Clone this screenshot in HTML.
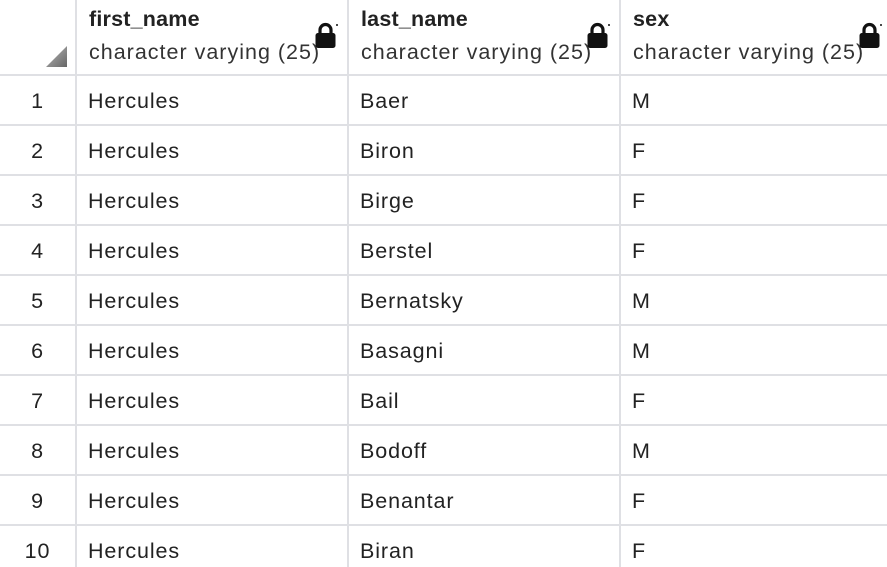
<!DOCTYPE html>
<html><head><style>
body{margin:0;width:887px;height:567px;overflow:hidden;background:#fff;font-family:"Liberation Sans",Arial,sans-serif;color:#222;}
.c{position:absolute;white-space:nowrap;}
.vl{position:absolute;top:0;width:2px;height:567px;background:#dfe0e4;}
.hl{position:absolute;left:0;width:887px;height:2px;background:#dfe0e4;}
.d{font-size:21.5px;letter-spacing:0.9px;}
.h{font-size:21.5px;font-weight:bold;letter-spacing:0.2px;}
.s{font-size:21.5px;color:#333;letter-spacing:1px;}
</style></head><body>
<div class="vl" style="left:75px"></div>
<div class="vl" style="left:347px"></div>
<div class="vl" style="left:619px"></div>
<div class="hl" style="top:74px"></div>
<div class="hl" style="top:124px"></div>
<div class="hl" style="top:174px"></div>
<div class="hl" style="top:224px"></div>
<div class="hl" style="top:274px"></div>
<div class="hl" style="top:324px"></div>
<div class="hl" style="top:374px"></div>
<div class="hl" style="top:424px"></div>
<div class="hl" style="top:474px"></div>
<div class="hl" style="top:524px"></div>
<svg style="position:absolute;left:46px;top:46px" width="22" height="21"><defs><linearGradient id="g" x1="0" y1="0" x2="1" y2="1"><stop offset="0" stop-color="#bbb"/><stop offset="1" stop-color="#666"/></linearGradient></defs><polygon points="21,0 21,21 0,21" fill="url(#g)"/></svg>
<div class="c h" style="left:89px;top:7px">first_name</div>
<div class="c s" style="left:89px;top:40px">character varying (25)</div>
<div class="c h" style="left:361px;top:7px">last_name</div>
<div class="c s" style="left:361px;top:40px">character varying (25)</div>
<div class="c h" style="left:633px;top:7px">sex</div>
<div class="c s" style="left:633px;top:40px">character varying (25)</div>
<svg style="position:absolute;left:313px;top:21px" width="26" height="28"><path d="M7 13V9a5.5 5.5 0 0 1 11 0v4" stroke="#111" stroke-width="3.2" fill="none"/><rect x="2.5" y="12" width="20" height="15" rx="2.5" fill="#111"/><circle cx="24" cy="4" r="1" fill="#111"/></svg>
<svg style="position:absolute;left:585px;top:21px" width="26" height="28"><path d="M7 13V9a5.5 5.5 0 0 1 11 0v4" stroke="#111" stroke-width="3.2" fill="none"/><rect x="2.5" y="12" width="20" height="15" rx="2.5" fill="#111"/><circle cx="24" cy="4" r="1" fill="#111"/></svg>
<svg style="position:absolute;left:857px;top:21px" width="26" height="28"><path d="M7 13V9a5.5 5.5 0 0 1 11 0v4" stroke="#111" stroke-width="3.2" fill="none"/><rect x="2.5" y="12" width="20" height="15" rx="2.5" fill="#111"/><circle cx="24" cy="4" r="1" fill="#111"/></svg>
<div id="rows"></div>
<script>
var d=[["Baer","M"],["Biron","F"],["Birge","F"],["Berstel","F"],["Bernatsky","M"],["Basagni","M"],["Bail","F"],["Bodoff","M"],["Benantar","F"],["Biran","F"]];
var h="";
d.forEach(function(r,i){var t=89+i*50;
h+='<div class="c d" style="left:0;width:75px;text-align:center;top:'+t+'px">'+(i+1)+'</div>';
h+='<div class="c d" style="left:88px;top:'+t+'px">Hercules</div>';
h+='<div class="c d" style="left:360px;top:'+t+'px">'+r[0]+'</div>';
h+='<div class="c d" style="left:632px;top:'+t+'px">'+r[1]+'</div>';});
document.getElementById("rows").innerHTML=h;
</script>
</body></html>
